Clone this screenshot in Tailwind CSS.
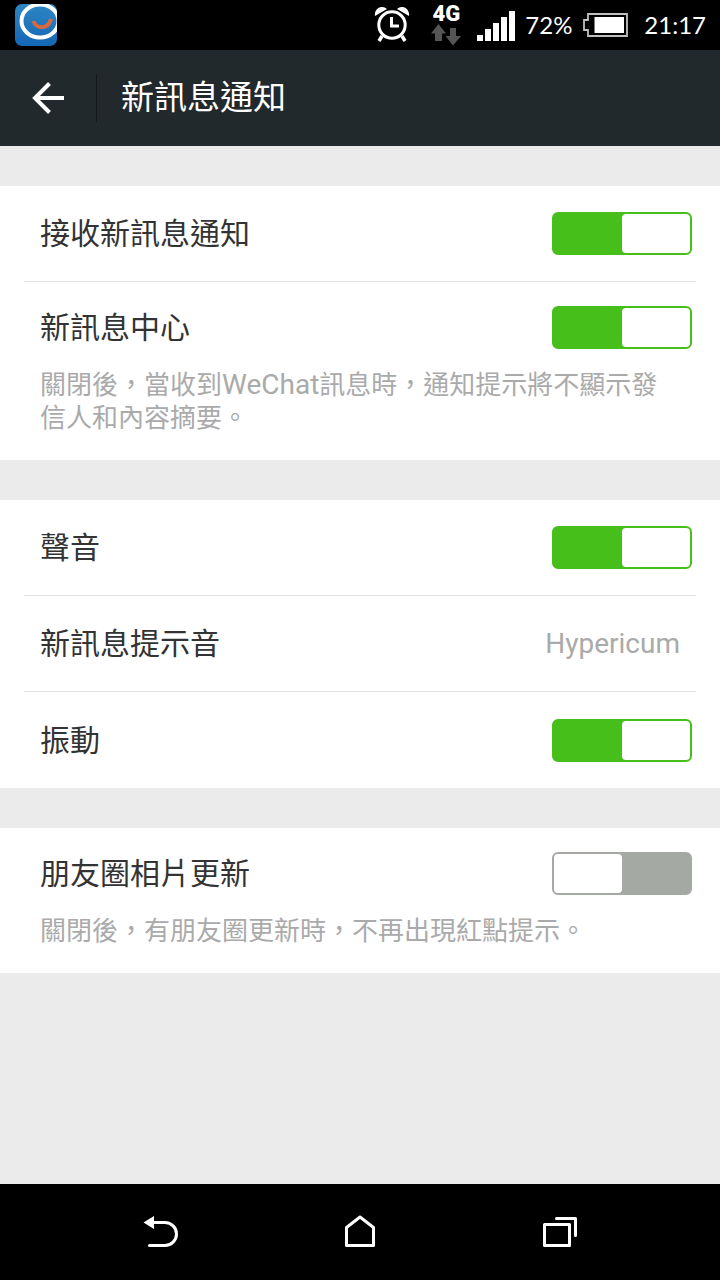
<!DOCTYPE html>
<html lang="zh-Hant">
<head>
<meta charset="utf-8">
<meta name="viewport" content="width=device-width, initial-scale=1">
<title>新訊息通知</title>
<script src="https://cdn.jsdelivr.net/npm/@tailwindcss/browser@4"></script>
</head>
<body class="flex min-h-screen flex-col bg-[#ebebeb] font-['Roboto','Noto_Sans_CJK_TC',sans-serif] text-[30px] text-[#333]">

<div class="flex h-[50px] items-center bg-black pr-3.5 pl-[15px] font-['Lato',sans-serif] text-[24px] text-white">
  <svg class="h-[42px] w-[42px]" viewBox="0 0 42 42" aria-hidden="true">
    <defs>
      <linearGradient id="tile" x1="0" y1="0" x2="0" y2="1"><stop offset="0" stop-color="#2e86c4"/><stop offset="1" stop-color="#1467b4"/></linearGradient>
      <clipPath id="clip"><rect width="42" height="42" rx="7"/></clipPath>
    </defs>
    <rect width="42" height="42" rx="7" fill="url(#tile)"/>
    <g clip-path="url(#clip)" fill="none">
      <ellipse cx="25" cy="17" rx="18.500" ry="16.500" stroke="#fff" stroke-width="4"/>
      <path d="M18.500 17C21 25 33 26 36 15" stroke="#d9693d" stroke-width="4"/>
    </g>
  </svg>
  <div class="ml-auto flex items-center">
    <svg class="mr-[21px] h-9 w-[36px]" viewBox="0 0 36 36" fill="none" stroke="#fff" aria-label="鬧鐘">
      <circle cx="18" cy="18" r="13.200" stroke-width="3"/>
      <path d="M17.500 10v9H25" stroke-width="3"/>
      <path d="M8 29l-3 5M28 29l3 5" stroke-width="3.500"/>
      <path d="M1 9C0 2 7-3 13 2ZM35 9C36 2 29-3 23 2Z" fill="#fff" stroke="none"/>
    </svg>
    <div class="mr-4 flex w-[30px] flex-col items-center">
      <span class="font-['Roboto',sans-serif] text-[22px] leading-5 font-black">4G</span>
      <svg class="h-[22px] w-[30px]" viewBox="0 0 30 22" fill="#555" aria-hidden="true"><path d="M7.500 0L15 9.500H11V17H4V9.500H0ZM19 4h6v8h5l-8 9.500L14.500 12H19Z"/></svg>
    </div>
    <svg class="mr-2.5 h-8 w-[38px]" viewBox="0 0 38 32" fill="#fff" aria-label="訊號"><path d="M0 26h6v6H0zM8 20h6v12H8zM16 14h6v18h-6zM24 8h6v24h-6zM32 2h6v30h-6z"/></svg>
    <span class="w-[57px]">72%</span>
    <svg class="mr-4 h-6 w-[46px]" viewBox="0 0 46 24" fill="none" aria-label="電池"><path d="M6 1h39v22H6v-6H2V7h4z" stroke="#bfbfbf" stroke-width="1.800"/><path d="M12.500 4H42v16H12.500z" fill="#fff"/></svg>
    <span>21:17</span>
  </div>
</div>

<header class="flex h-24 items-center bg-[#22292c] text-white">
  <button type="button" aria-label="返回" class="flex h-12 w-[97px] items-center border-r border-[#13191b] pl-8">
    <svg class="h-8 w-8" viewBox="0 0 32 32" fill="none" stroke="#fff" stroke-width="4"><path d="M32 16H3M17.500 1.500L3 16L17.500 30.500"/></svg>
  </button>
  <h1 class="pl-6 text-[33px] leading-[48px]">新訊息通知</h1>
</header>

<main class="flex flex-1 flex-col gap-10 pt-10">
  <section class="bg-white px-6">
    <div class="flex h-24 items-center justify-between border-b border-[#e1e1e1] pr-1 pl-4">
      <label for="receive">接收新訊息通知</label>
      <input id="receive" type="checkbox" role="switch" checked class="flex h-[43px] w-[140px] shrink-0 appearance-none justify-start rounded-md border-2 border-[#a5a9a3] bg-[#a5a9a3] before:h-full before:w-1/2 before:rounded-sm before:bg-white checked:justify-end checked:border-[#46bf1b] checked:bg-[#46bf1b]">
    </div>
    <div class="pt-6 pb-[25px]">
      <div class="flex h-[43px] items-center justify-between pr-1 pl-4">
        <label for="center">新訊息中心</label>
        <input id="center" type="checkbox" role="switch" checked aria-describedby="center-note" class="flex h-[43px] w-[140px] shrink-0 appearance-none justify-start rounded-md border-2 border-[#a5a9a3] bg-[#a5a9a3] before:h-full before:w-1/2 before:rounded-sm before:bg-white checked:justify-end checked:border-[#46bf1b] checked:bg-[#46bf1b]">
      </div>
      <p id="center-note" class="px-4 pt-5 text-[26px] leading-[33px] text-[#aaa]">關閉後，當收到<span class="text-[28px] leading-none">WeChat</span>訊息時，通知提示將不顯示發信人和內容摘要。</p>
    </div>
  </section>

  <section class="bg-white px-6">
    <div class="flex h-24 items-center justify-between border-b border-[#e1e1e1] pr-1 pl-4">
      <label for="sound">聲音</label>
      <input id="sound" type="checkbox" role="switch" checked class="flex h-[43px] w-[140px] shrink-0 appearance-none justify-start rounded-md border-2 border-[#a5a9a3] bg-[#a5a9a3] before:h-full before:w-1/2 before:rounded-sm before:bg-white checked:justify-end checked:border-[#46bf1b] checked:bg-[#46bf1b]">
    </div>
    <button type="button" class="flex h-24 w-full items-center justify-between border-b border-[#e1e1e1] px-4">
      <span>新訊息提示音</span>
      <span class="text-[28px] text-[#aaa]">Hypericum</span>
    </button>
    <div class="flex h-24 items-center justify-between pr-1 pl-4">
      <label for="vibrate">振動</label>
      <input id="vibrate" type="checkbox" role="switch" checked class="flex h-[43px] w-[140px] shrink-0 appearance-none justify-start rounded-md border-2 border-[#a5a9a3] bg-[#a5a9a3] before:h-full before:w-1/2 before:rounded-sm before:bg-white checked:justify-end checked:border-[#46bf1b] checked:bg-[#46bf1b]">
    </div>
  </section>

  <section class="bg-white px-6 pt-6 pb-[25px]">
    <div class="flex h-[43px] items-center justify-between pr-1 pl-4">
      <label for="moments">朋友圈相片更新</label>
      <input id="moments" type="checkbox" role="switch" aria-describedby="moments-note" class="flex h-[43px] w-[140px] shrink-0 appearance-none justify-start rounded-md border-2 border-[#a5a9a3] bg-[#a5a9a3] before:h-full before:w-1/2 before:rounded-sm before:bg-white checked:justify-end checked:border-[#46bf1b] checked:bg-[#46bf1b]">
    </div>
    <p id="moments-note" class="px-4 pt-5 text-[26px] leading-[33px] text-[#aaa]">關閉後，有朋友圈更新時，不再出現紅點提示。</p>
  </section>
</main>

<nav class="flex h-24 items-center justify-center bg-black text-white">
  <button type="button" aria-label="返回" class="flex w-[200px] justify-center"><svg class="h-9 w-9" viewBox="0 0 36 36" fill="none" stroke="#fff" stroke-width="3" stroke-linecap="round"><path d="M10 8.500H23a11.500 11.500 0 0 1 0 23H7.500"/><path d="M1.500 8.500L12 2v13z" fill="#fff" stroke="none"/></svg></button>
  <button type="button" aria-label="主畫面" class="flex w-[200px] justify-center"><svg class="h-9 w-9" viewBox="0 0 36 36" fill="none" stroke="#fff" stroke-width="3" stroke-linejoin="round"><path d="M4.500 13.500L18 3L31.500 13.500V31.500H4.500z"/></svg></button>
  <button type="button" aria-label="最近使用" class="flex w-[200px] justify-center"><svg class="h-9 w-9" viewBox="0 0 36 36" fill="none" stroke="#fff" stroke-width="3" stroke-linecap="round" stroke-linejoin="round"><path d="M2.500 10.500h25v21h-25zM14.500 4.500H33.500V21.500"/></svg></button>
</nav>
</body>
</html>
